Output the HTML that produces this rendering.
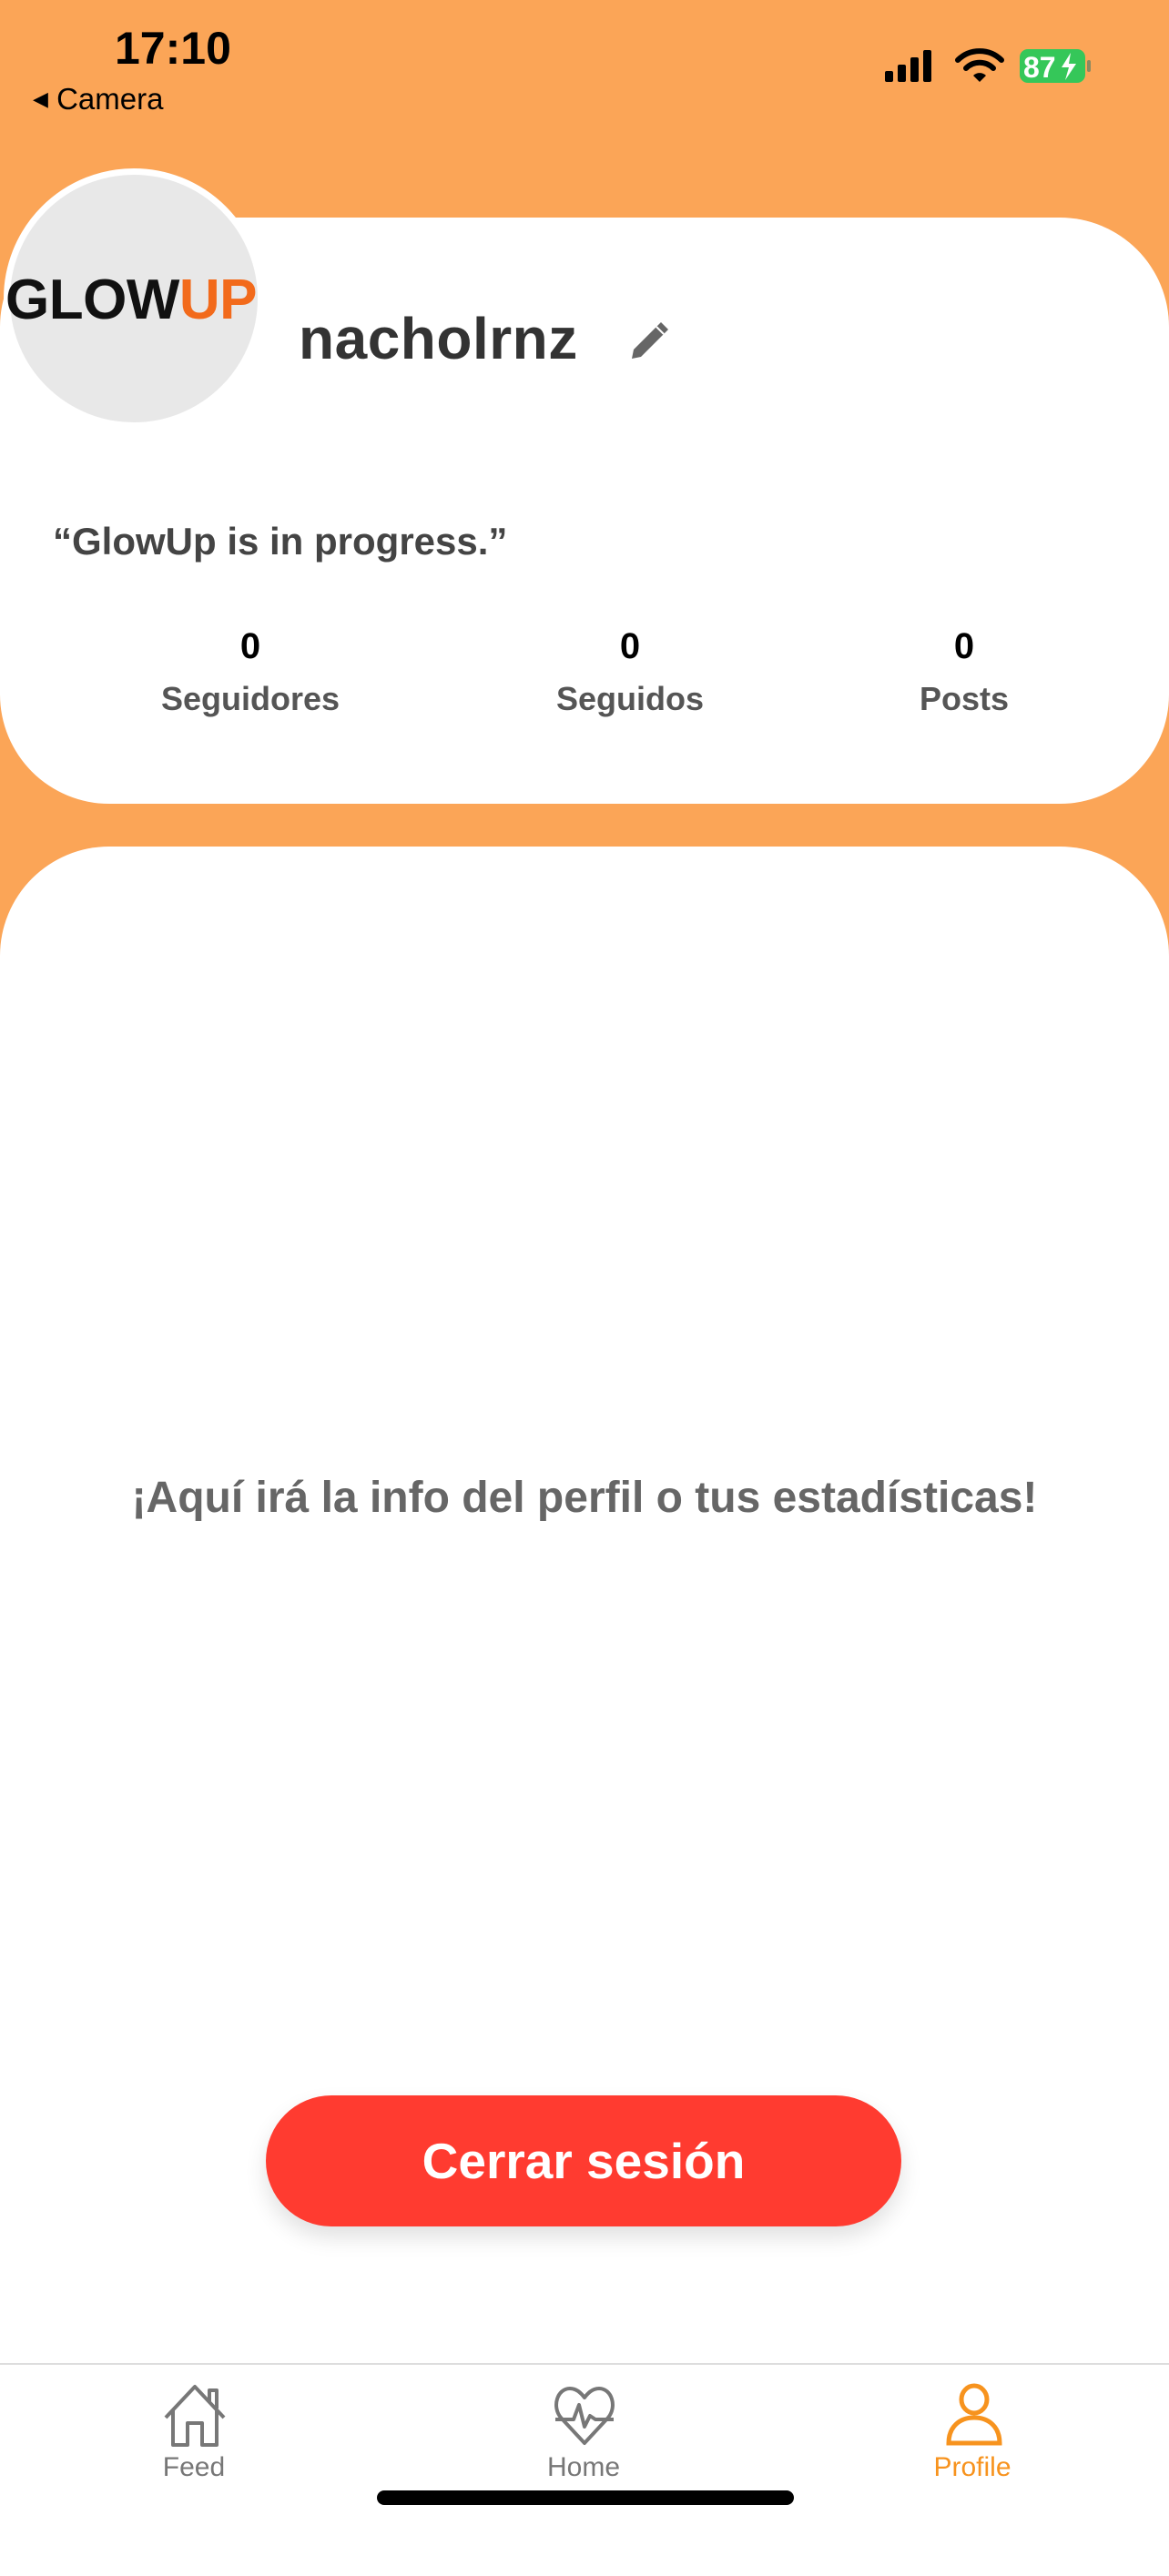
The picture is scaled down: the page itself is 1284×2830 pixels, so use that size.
<!DOCTYPE html>
<html><head><meta charset="utf-8"><style>
*{margin:0;padding:0;box-sizing:border-box}
body{width:1284px;height:2778px;background:#FBA557;position:relative;overflow:hidden;font-family:"Liberation Sans",sans-serif}
.abs{position:absolute}
.card1{left:0;top:239px;width:1284px;height:644px;background:#fff;border-radius:120px}
.card2{left:0;top:930px;width:1284px;height:1900px;background:#fff;border-radius:120px 120px 0 0}
.b{font-weight:bold}
</style></head><body>
<div class="abs b" style="left:126px;top:24px;font-size:50px;color:#000">17:10</div>
<div class="abs" style="left:36px;top:90px;font-size:33px;color:#000"><span style="font-size:22px;position:relative;top:-4px">◀</span> Camera</div>
<svg class="abs" style="left:970px;top:52px" width="235" height="42" viewBox="0 0 235 42">
<rect x="2" y="26" width="9" height="12" rx="2" fill="#000"/><rect x="16" y="19" width="9" height="19" rx="2" fill="#000"/><rect x="30" y="11" width="9" height="27" rx="2" fill="#000"/><rect x="44" y="3" width="9" height="35" rx="2" fill="#000"/>
<path d="M82 14 A34 34 0 0 1 130 14" stroke="#000" stroke-width="6" fill="none" stroke-linecap="round"/>
<path d="M91 23 A21 21 0 0 1 121 23" stroke="#000" stroke-width="6" fill="none" stroke-linecap="round"/>
<path d="M99 31 L106 38 L113 31 A10 10 0 0 0 99 31Z" fill="#000"/>
<rect x="150" y="2" width="72" height="37" rx="9" fill="#35C759"/>
<rect x="224" y="14" width="4" height="13" rx="2" fill="#8a8a60"/>
<text x="154" y="33" font-family="Liberation Sans" font-weight="bold" font-size="32" fill="#fff">87</text>
<path d="M206 6 L196 22 L204 22 L200 36 L212 18 L204 18Z" fill="#fff"/>
</svg>
<div class="abs card1"></div>
<div class="abs card2"></div>
<div class="abs" style="left:4px;top:185px;width:286px;height:286px;border-radius:50%;background:#e8e8e8;border:7px solid #fff"></div>
<div class="abs b" style="left:6px;top:294px;font-size:62px;letter-spacing:-0.5px;color:#111">GLOW<span style="color:#F26A1B">UP</span></div>
<div class="abs b" style="left:328px;top:335px;font-size:64px;color:#333;letter-spacing:0.5px">nacholrnz</div>
<svg class="abs" style="left:688px;top:348px" width="52" height="52" viewBox="0 0 52 52"><path d="M6 46 L8 36 L38 6 L46 14 L16 44 Z" fill="#666"/><path d="M33 11 L41 19" stroke="#fff" stroke-width="2"/></svg>
<div class="abs b" style="left:58px;top:571px;font-size:42px;color:#444;letter-spacing:0">“GlowUp is in progress.”</div>
<div class="abs b" style="left:160px;top:688px;width:230px;text-align:center;font-size:40px;color:#000">0<div style="font-size:36px;color:#555;margin-top:14px">Seguidores</div></div>
<div class="abs b" style="left:577px;top:688px;width:230px;text-align:center;font-size:40px;color:#000">0<div style="font-size:36px;color:#555;margin-top:14px">Seguidos</div></div>
<div class="abs b" style="left:944px;top:688px;width:230px;text-align:center;font-size:40px;color:#000">0<div style="font-size:36px;color:#555;margin-top:14px">Posts</div></div>
<div class="abs b" style="left:0;top:1618px;width:1284px;text-align:center;font-size:48px;color:#666">¡Aquí irá la info del perfil o tus estadísticas!</div>
<div class="abs b" style="left:292px;top:2302px;width:698px;height:144px;border-radius:72px;background:#FF3B30;color:#fff;font-size:55px;text-align:center;line-height:144px;box-shadow:0 12px 24px rgba(0,0,0,0.12)">Cerrar sesión</div>
<div class="abs" style="left:0;top:2596px;width:1284px;height:2px;background:#ddd"></div>
<div class="abs" style="left:0;top:2598px;width:1284px;height:180px;background:#fff"></div>
<svg class="abs" style="left:178px;top:2618px" width="72" height="72" viewBox="0 0 72 72" fill="none" stroke="#777" stroke-width="4" stroke-linejoin="round"><path d="M4 38 L36 4 L68 38"/><path d="M12 30 V68 H28 V44 H44 V68 H60 V30"/><path d="M52 20 V8 H60 V28"/></svg>
<svg class="abs" style="left:608px;top:2620px" width="68" height="68" viewBox="0 0 68 68" fill="none" stroke="#777" stroke-width="4" stroke-linejoin="round"><path d="M34 64 L8 36 C-2 24 4 4 18 4 C26 4 31 10 34 14 C37 10 42 4 50 4 C64 4 70 24 60 36 Z"/><path d="M2 38 H22 L28 22 L34 46 L40 34 L46 38 H66"/></svg>
<svg class="abs" style="left:1038px;top:2618px" width="64" height="72" viewBox="0 0 64 72" fill="none" stroke="#F7931E" stroke-width="5"><ellipse cx="32" cy="18" rx="14" ry="15"/><path d="M4 66 C4 48 16 38 32 38 C48 38 60 48 60 66 Z"/></svg>
<div class="abs" style="left:113px;top:2694px;width:200px;text-align:center;font-size:30px;color:#777">Feed</div>
<div class="abs" style="left:541px;top:2694px;width:200px;text-align:center;font-size:30px;color:#777">Home</div>
<div class="abs" style="left:968px;top:2694px;width:200px;text-align:center;font-size:30px;color:#F7931E">Profile</div>
<div class="abs" style="left:414px;top:2736px;width:458px;height:16px;border-radius:8px;background:#000"></div>
</body></html>
